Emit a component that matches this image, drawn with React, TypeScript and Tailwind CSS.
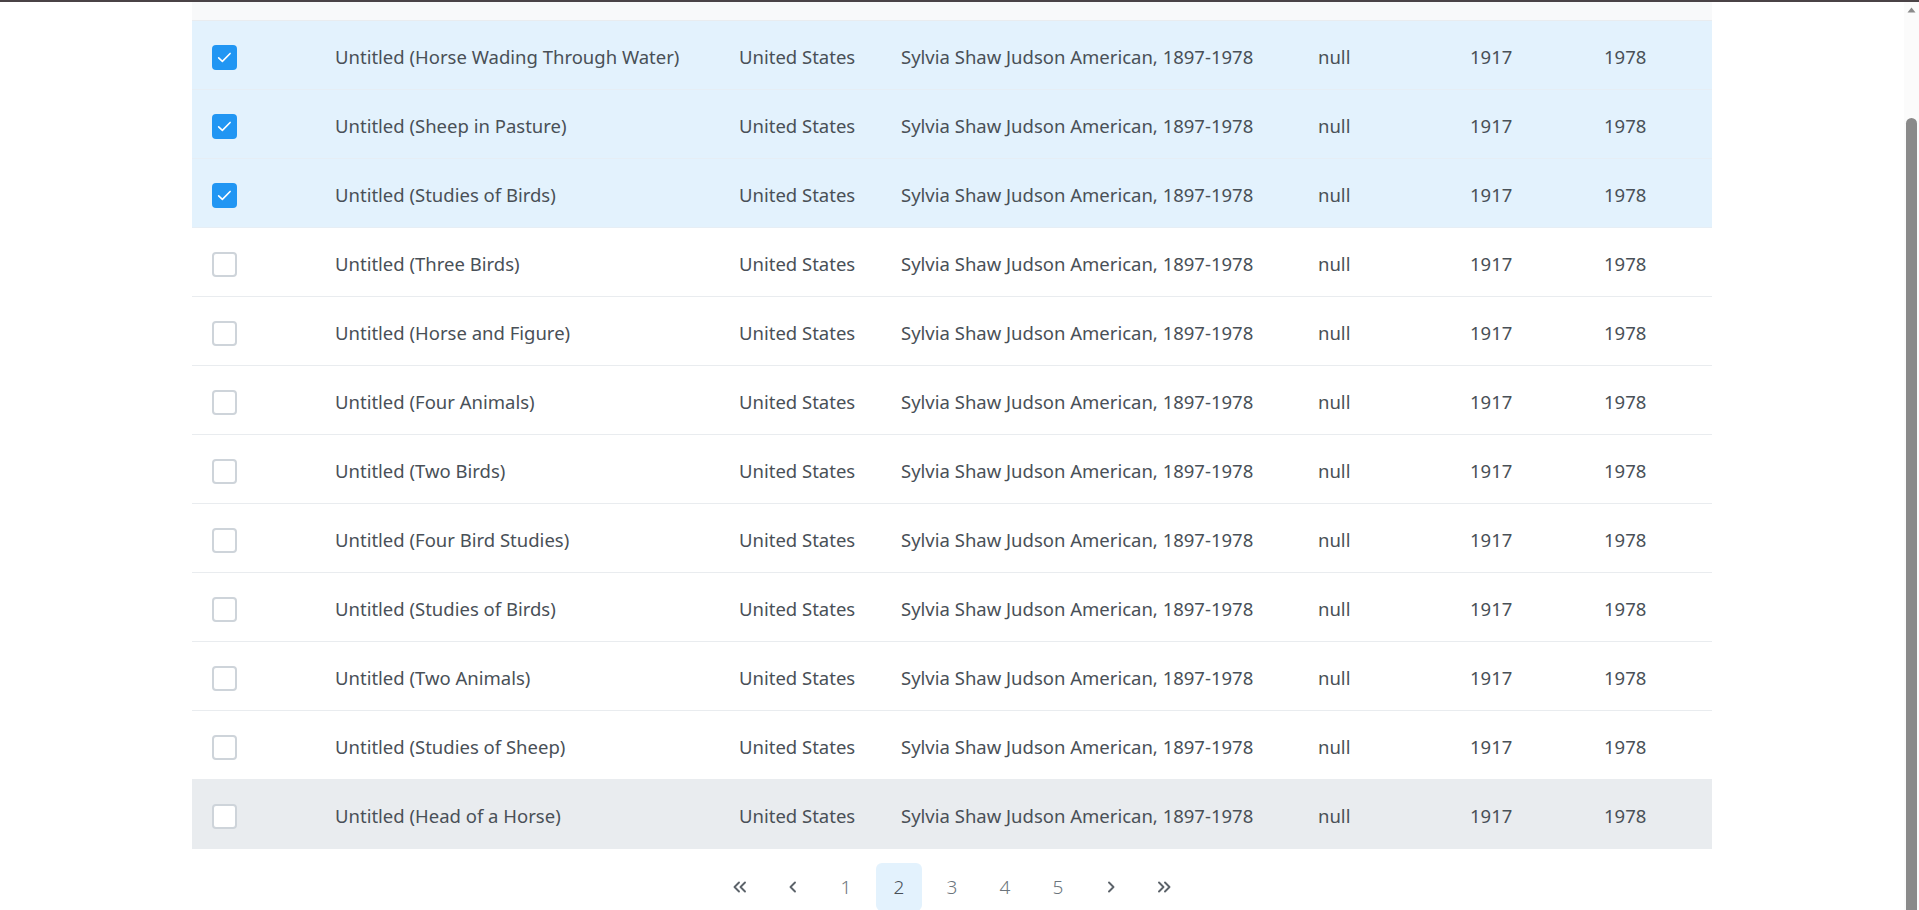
import React from 'react';

interface Artwork {
  title: string;
  selected?: boolean;
  hover?: boolean;
}

const artworks: Artwork[] = [
  { title: 'Untitled (Horse Wading Through Water)', selected: true },
  { title: 'Untitled (Sheep in Pasture)', selected: true },
  { title: 'Untitled (Studies of Birds)', selected: true },
  { title: 'Untitled (Three Birds)' },
  { title: 'Untitled (Horse and Figure)' },
  { title: 'Untitled (Four Animals)' },
  { title: 'Untitled (Two Birds)' },
  { title: 'Untitled (Four Bird Studies)' },
  { title: 'Untitled (Studies of Birds)' },
  { title: 'Untitled (Two Animals)' },
  { title: 'Untitled (Studies of Sheep)' },
  { title: 'Untitled (Head of a Horse)', hover: true },
];

const Checkbox: React.FC<{ checked?: boolean }> = ({ checked }) =>
  checked ? (
    <span className="flex h-[25px] w-[25px] items-center justify-center rounded-[4px] bg-[#2196f3]">
      <svg width="17" height="17" viewBox="0 0 16 16" fill="none">
        <path d="M2.5 8.3 6 11.6 13.3 4.2" stroke="white" strokeWidth="1.5" strokeLinecap="round" strokeLinejoin="round" />
      </svg>
    </span>
  ) : (
    <span className="block h-[25px] w-[25px] rounded-[4px] border-2 border-[#ced4da] bg-white" />
  );

// pagination arrows, thicker than the page digits
const Chevron: React.FC<{ dir: 'left' | 'right'; double?: boolean }> = ({ dir, double }) => (
  <svg width="16" height="16" viewBox="0 0 16 16" fill="none" stroke="#5c636a" strokeWidth="1.9" strokeLinecap="round" strokeLinejoin="round">
    {dir === 'left' ? (
      double ? (
        <>
          <path d="M7 3.5 2.5 8 7 12.5" />
          <path d="M13 3.5 8.5 8l4.5 4.5" />
        </>
      ) : (
        <path d="M10 3.5 5.5 8l4.5 4.5" />
      )
    ) : double ? (
      <>
        <path d="M3 3.5 7.5 8 3 12.5" />
        <path d="M9 3.5 13.5 8 9 12.5" />
      </>
    ) : (
      <path d="M6 3.5 10.5 8 6 12.5" />
    )}
  </svg>
);

const PageButton: React.FC<{ active?: boolean; children: React.ReactNode }> = ({ active, children }) => (
  <button
    className={
      active
        ? 'flex h-[48px] w-[46px] items-center justify-center rounded-md bg-[#e3f2fd] text-[19px] font-light text-[#495057]'
        : 'flex h-[48px] w-[46px] items-center justify-center rounded-md text-[19px] font-light text-[#6c757d]'
    }
  >
    {children}
  </button>
);

export default function App() {
  return (
    <div className="flex h-[910px] flex-col overflow-hidden bg-white font-['Noto_Sans',sans-serif]">
      <div className="h-[2px] bg-[#4a4346]" />
      <div className="flex flex-1 overflow-hidden">
        <main className="flex-1">
          <div className="mx-auto w-[1520px]">
            <div className="h-[19px] border-b border-[#e9ecef] bg-[#f8f9fa]" />
            {artworks.map((a, i) => (
              <div
                key={i}
                className={
                  'grid h-[69px] grid-cols-[143px_404px_162px_417px_152px_134px_1fr] items-center border-b pt-[4px] text-[18.5px] text-[#495057] ' +
                  (a.selected
                    ? 'border-[#e6eef5] bg-[#e3f2fd]'
                    : a.hover
                      ? 'border-[#e9ecef] bg-[#e9ecef]'
                      : 'border-[#e9ecef] bg-white')
                }
              >
                <div className="pl-[20px]">
                  <Checkbox checked={a.selected} />
                </div>
                <div>{a.title}</div>
                <div>United States</div>
                <div>Sylvia Shaw Judson American, 1897-1978</div>
                <div>null</div>
                <div>1917</div>
                <div>1978</div>
              </div>
            ))}
            <nav className="mt-[14px] flex justify-center gap-[7px]">
              <PageButton><Chevron dir="left" double /></PageButton>
              <PageButton><Chevron dir="left" /></PageButton>
              <PageButton>1</PageButton>
              <PageButton active>2</PageButton>
              <PageButton>3</PageButton>
              <PageButton>4</PageButton>
              <PageButton>5</PageButton>
              <PageButton><Chevron dir="right" /></PageButton>
              <PageButton><Chevron dir="right" double /></PageButton>
            </nav>
          </div>
        </main>
        <div className="flex w-[15px] flex-col items-center bg-[#fbfbfb]">
          <svg width="9" height="6" viewBox="0 0 9 6" className="mt-[5px]">
            <path d="M4.5 0.5 8.5 5.5H0.5Z" fill="#8a8a8a" />
          </svg>
          <div className="mt-[105px] w-[11px] flex-1 rounded-t-full bg-[#8a8a8a]" />
        </div>
      </div>
    </div>
  );
}
